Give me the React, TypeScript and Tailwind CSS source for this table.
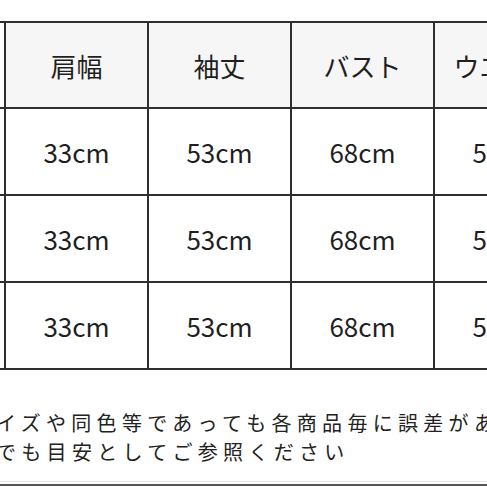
const HEADERS = ["", "肩幅", "袖丈", "バスト", "ウエスト"];
const ROWS = [
  ["", "33cm", "53cm", "68cm", "56cm"],
  ["", "33cm", "53cm", "68cm", "56cm"],
  ["", "33cm", "53cm", "68cm", "56cm"],
];

const font = { fontFamily: '"Noto Sans CJK JP", "Noto Sans", sans-serif' };

export default function App() {
  return (
    <div
      className="relative h-[487px] w-[487px] overflow-hidden bg-white text-[#1f1f1f]"
      style={font}
    >
      <div className="pt-[21px]">
        <div className="grid w-[580px] grid-cols-[4px_141px_141px_141px_141px] gap-[2px] bg-[#2e2e2e] py-[2px]">
          {HEADERS.map((h, i) => (
            <div
              key={"h" + i}
              className={
                "flex h-[84px] items-center justify-center whitespace-nowrap text-[26px] " +
                (i === 0 ? "bg-white" : "bg-[#f6f6f6]")
              }
            >
              {h}
            </div>
          ))}
          {ROWS.map((row, r) =>
            row.map((c, i) => (
              <div
                key={r + "-" + i}
                className="flex h-[85px] items-center justify-center whitespace-nowrap bg-white text-[26px]"
              >
                {c}
              </div>
            ))
          )}
        </div>
      </div>

      <div className="ml-[-4px] mt-[38px] whitespace-nowrap text-[20px] leading-[29px] tracking-[5.3px] text-[#222]">
        <p>イズや同色等であっても各商品毎に誤差があります。</p>
        <p>でも目安としてご参照ください</p>
      </div>

      <div className="mt-[15px] h-px bg-[#e6e6e6]" />
      <div className="mt-[2px] h-[2px] bg-[#555]" />
    </div>
  );
}
